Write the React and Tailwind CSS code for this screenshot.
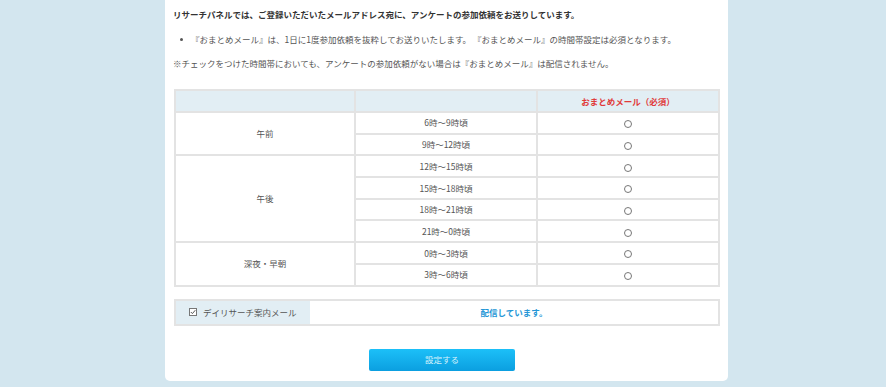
import React from 'react';

const slots = [
  { group: '午前', times: ['6時～9時頃', '9時～12時頃'] },
  { group: '午後', times: ['12時～15時頃', '15時～18時頃', '18時～21時頃', '21時～0時頃'] },
  { group: '深夜・早朝', times: ['0時～3時頃', '3時～6時頃'] },
];

const cell = 'border-2 border-[#e3e3e3] text-center align-middle p-0';

const App = () => {
  return (
    <div
      className="w-[886px] h-[387px] bg-[#d3e6ef] overflow-hidden text-[8.5px] text-[#555]"
      style={{ fontFamily: '"Noto Sans CJK JP", "Noto Sans", sans-serif' }}
    >
      <div className="ml-[165px] w-[563px] h-[381px] bg-white rounded-b-[5px] px-[8px] pt-[7px]">
        <p className="font-bold text-[#333] leading-[14px]">
          リサーチパネルでは、ご登録いただいたメールアドレス宛に、アンケートの参加依頼をお送りしています。
        </p>
        <ul className="mt-[11px] pl-[7px]">
          <li className="flex items-center leading-[14px] whitespace-pre">
            <span className="w-[3px] h-[3px] rounded-full bg-[#555] mr-[8px]"></span>
            {'『おまとめメール』は、1日に1度参加依頼を抜粋してお送りいたします。 『おまとめメール』の時間帯設定は必須となります。'}
          </li>
        </ul>
        <p className="mt-[10px] leading-[14px]">
          ※チェックをつけた時間帯においても、アンケートの参加依頼がない場合は『おまとめメール』は配信されません。
        </p>

        <table className="mt-[19px] ml-[1px] w-[546px] border-collapse table-fixed">
          <colgroup>
            <col className="w-[180px]" />
            <col className="w-[182px]" />
            <col />
          </colgroup>
          <thead>
            <tr className="h-[22px] bg-[#e2eef4]">
              <th className={cell}></th>
              <th className={cell}></th>
              <th className={`${cell} text-[#e03a3a] font-bold`}>おまとめメール（必須）</th>
            </tr>
          </thead>
          <tbody>
            {slots.map((s) =>
              s.times.map((t, i) => (
                <tr key={t} className="h-[21.7px]">
                  {i === 0 && (
                    <td className={cell} rowSpan={s.times.length}>
                      {s.group}
                    </td>
                  )}
                  <td className={cell}>{t}</td>
                  <td className={cell}>
                    <span className="inline-block w-[8px] h-[8px] rounded-full border border-[#777] align-middle"></span>
                  </td>
                </tr>
              ))
            )}
          </tbody>
        </table>

        <div className="mt-[12px] ml-[1px] w-[546px] h-[27px] flex border-2 border-[#e3e3e3]">
          <div className="w-[134px] bg-[#e2eef4] flex items-center pl-[13px] gap-[6px]">
            <svg width="8" height="8" viewBox="0 0 8 8">
              <rect x="0.5" y="0.5" width="7" height="7" fill="white" stroke="#777" />
              <path d="M1.8 4 L3.4 5.6 L6.3 2.2" fill="none" stroke="#555" strokeWidth="1" />
            </svg>
            <span>デイリサーチ案内メール</span>
          </div>
          <div className="flex-1 flex items-center justify-center font-bold text-[#2596d6]">
            配信しています。
          </div>
        </div>

        <div className="mt-[23px] flex">
          <button className="ml-[196px] w-[146px] h-[22px] rounded-[2px] bg-gradient-to-b from-[#1cc0f8] to-[#0b9fe0] text-[#d8f2fc] text-[8.5px]">
            設定する
          </button>
        </div>
      </div>
    </div>
  );
};

export default App;
